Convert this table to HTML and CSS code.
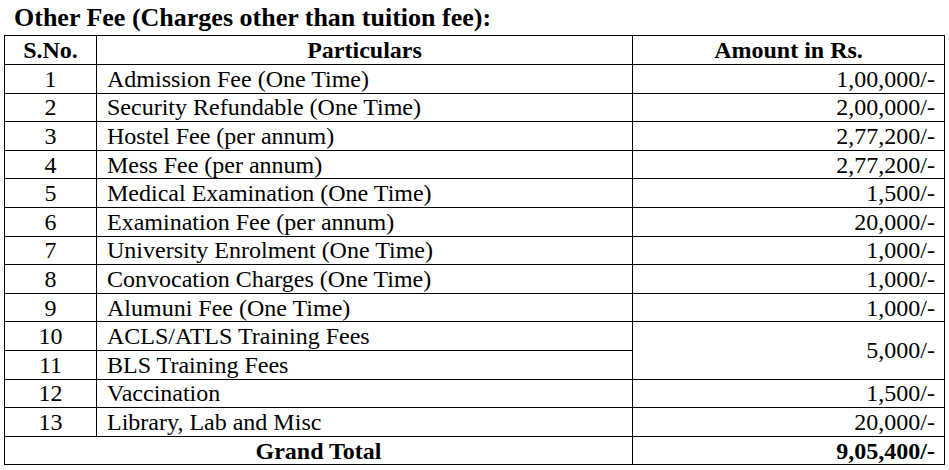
FILE: index.html
```html
<!DOCTYPE html>
<html>
<head>
<meta charset="utf-8">
<link rel="stylesheet" href="styles.css">
</head>
<body>
<div class="page">
  <h1 class="title">Other Fee (Charges other than tuition fee):</h1>
  <table class="fees">
    <colgroup>
      <col class="c-sno">
      <col class="c-part">
      <col class="c-amt">
    </colgroup>
    <thead>
      <tr><th>S.No.</th><th>Particulars</th><th>Amount in Rs.</th></tr>
    </thead>
    <tbody>
      <tr><td class="sno">1</td><td class="part">Admission Fee (One Time)</td><td class="amt">1,00,000/-</td></tr>
      <tr><td class="sno">2</td><td class="part">Security Refundable (One Time)</td><td class="amt">2,00,000/-</td></tr>
      <tr><td class="sno">3</td><td class="part">Hostel Fee (per annum)</td><td class="amt">2,77,200/-</td></tr>
      <tr><td class="sno">4</td><td class="part">Mess Fee (per annum)</td><td class="amt">2,77,200/-</td></tr>
      <tr><td class="sno">5</td><td class="part">Medical Examination (One Time)</td><td class="amt">1,500/-</td></tr>
      <tr><td class="sno">6</td><td class="part">Examination Fee (per annum)</td><td class="amt">20,000/-</td></tr>
      <tr><td class="sno">7</td><td class="part">University Enrolment (One Time)</td><td class="amt">1,000/-</td></tr>
      <tr><td class="sno">8</td><td class="part">Convocation Charges (One Time)</td><td class="amt">1,000/-</td></tr>
      <tr><td class="sno">9</td><td class="part">Alumuni Fee (One Time)</td><td class="amt">1,000/-</td></tr>
      <tr><td class="sno">10</td><td class="part">ACLS/ATLS Training Fees</td><td class="amt" rowspan="2">5,000/-</td></tr>
      <tr><td class="sno">11</td><td class="part">BLS Training Fees</td></tr>
      <tr><td class="sno">12</td><td class="part">Vaccination</td><td class="amt">1,500/-</td></tr>
      <tr><td class="sno">13</td><td class="part">Library, Lab and Misc</td><td class="amt">20,000/-</td></tr>
      <tr class="total"><td colspan="2" class="total-label">Grand Total</td><td class="amt">9,05,400/-</td></tr>
    </tbody>
  </table>
</div>
</body>
</html>
```
FILE: styles.css
```css
html, body {
  margin: 0;
  padding: 0;
  background: #ffffff;
}
body {
  font-family: "Liberation Serif", "Times New Roman", serif;
  color: #000000;
}
.page {
  padding: 0 0 0 4px;
}
.title {
  margin: 0;
  font-size: 26px;
  font-weight: bold;
  line-height: 35px;
  height: 35px;
  padding-left: 10px;
}
.fees {
  border-collapse: collapse;
  width: 940px;
  table-layout: fixed;
  font-size: 24px;
}
.c-sno { width: 92px; }
.c-part { width: 536px; }
.c-amt { width: 312px; }
.fees th, .fees td {
  border: 1px solid #000000;
  height: 27.6px;
  padding: 0;
  line-height: 24px;
  vertical-align: middle;
}
.fees th {
  font-weight: bold;
  text-align: center;
  height: 28px;
}
.sno { text-align: center; }
.part { padding-left: 10px !important; }
.amt { text-align: right; padding-right: 9px !important; }
.total td { font-weight: bold; }
.total-label { text-align: center; }
```
